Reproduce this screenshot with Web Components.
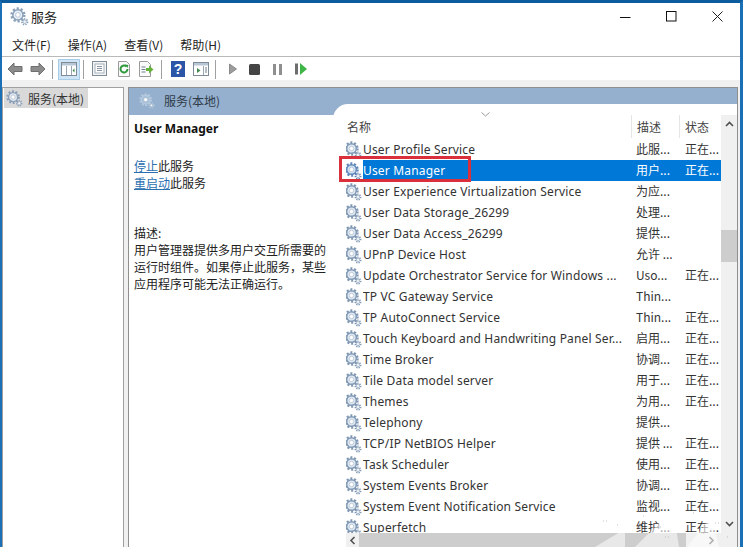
<!DOCTYPE html>
<html lang="zh-CN">
<head>
<meta charset="utf-8">
<title>服务</title>
<style>
  html, body { margin: 0; height: 100%; overflow: hidden; background: #fff; }
  body { font: 12px "Noto Sans", "Noto Sans CJK SC", sans-serif; color: #111; }
</style>
</head>
<body>
<svc-window></svc-window>

<script>
const CJK = `"Noto Sans CJK SC", "Noto Sans", sans-serif`;

class SvcGear extends HTMLElement {
    connectedCallback() {
        const size = this.getAttribute("size") || 18;
        const main = this.getAttribute("main") || "#7f97b3";
        const inner = this.getAttribute("inner") || "#dfe8f2";
        this.attachShadow({ mode: "open" });
        this.shadowRoot.innerHTML = `
      <style>
        :host { display: inline-flex; flex: none; }
        svg { display: block; }
      </style>
      <svg width="${size}" height="${size}" viewBox="0 0 18 18">
        <circle cx="7.5" cy="7.5" r="6" fill="none" stroke="${main}" stroke-width="2.4" stroke-dasharray="2 1.77"/>
        <circle cx="7.5" cy="7.5" r="4.8" fill="${inner}" stroke="${main}" stroke-width="1.4"/>
        <circle cx="7.5" cy="7.5" r="2.2" fill="#fff" stroke="#a9bbcf" stroke-width=".7"/>
        <circle cx="14" cy="14" r="2.6" fill="none" stroke="${main}" stroke-width="1.7" stroke-dasharray="1.2 1.05"/>
        <circle cx="14" cy="14" r="1.6" fill="#f2f5f8" stroke="#8ea3ba" stroke-width=".6"/>
      </svg>
    `;
    }
}

class SvcTitlebar extends HTMLElement {
    constructor() {
        super();
        this.attachShadow({ mode: "open" });
        this.shadowRoot.innerHTML = `
      <style>
        :host { display: flex; align-items: center; height: 30px; flex: none; box-sizing: border-box; padding: 0 0 4px 8px; background: #fff; }
        .title { margin-left: 2px; font: 13px ${CJK}; color: #222; }
        .btns { margin-left: auto; display: flex; }
        .btn { width: 46px; height: 26px; display: flex; align-items: center; justify-content: center; }
        svg { display: block; }
      </style>
      <svc-gear size="19" main="#8aa0b8" inner="#e8eef4"></svc-gear>
      <span class="title">服务</span>
      <div class="btns">
        <div class="btn"><svg width="11" height="11"><path d="M0 6.5h10.500" stroke="#111" stroke-width="1"/></svg></div>
        <div class="btn"><svg width="11" height="11"><rect x=".5" y=".5" width="9.500" height="9.500" fill="none" stroke="#111"/></svg></div>
        <div class="btn"><svg width="11" height="11"><path d="M.5.500l10 10M10.500.500l-10 10" stroke="#222" stroke-width="1"/></svg></div>
      </div>
    `;
    }
}

class SvcMenubar extends HTMLElement {
    constructor() {
        super();
        this.attachShadow({ mode: "open" });
        this.shadowRoot.innerHTML = `
      <style>
        :host { display: flex; gap: 17px; height: 24px; flex: none; align-items: center; padding-left: 10px; box-sizing: border-box;
                font: 12px ${CJK}; color: #222; border-bottom: 1px solid #b9b9b9; background: #fff; }
        span:first-child { margin-right: -2px; }
      </style>
      <span>文件(F)</span><span>操作(A)</span><span>查看(V)</span><span>帮助(H)</span>
    `;
    }
}

class SvcToolbar extends HTMLElement {
    constructor() {
        super();
        this.attachShadow({ mode: "open" });
        this.shadowRoot.innerHTML = `
      <style>
        :host { display: flex; height: 23px; flex: none; box-sizing: border-box; padding: 1px 0 0 3px; align-items: center; background: #fff; }
        svg { display: block; flex: none; }
        .sep { width: 1px; height: 19px; background: #a0a0a0; flex: none; }
        .active { width: 22px; height: 21px; background: #cfe4f5; border: 1px solid #a8cde8; box-sizing: border-box;
                  display: flex; align-items: center; justify-content: center; flex: none; }
      </style>
      <svg style="margin-left:2px" width="16" height="14"><path d="M1 7l6-6v3.500h8v5H7v3.500z" fill="#8c8c8c" stroke="#6f6f6f"/></svg>
      <svg style="margin-left:7px" width="16" height="14"><path d="M15 7L9 1v3.500H1v5h8v3.500z" fill="#8c8c8c" stroke="#6f6f6f"/></svg>
      <div class="sep" style="margin-left:6px"></div>
      <div class="active" style="margin-left:5px">
        <svg width="16" height="14"><rect x=".5" y=".5" width="15" height="13" fill="#fff" stroke="#7e8c99"/><rect x="1" y="1" width="14" height="2.500" fill="#b9c6d3"/><path d="M5.500 4v9M10.500 4v9" stroke="#9aa7b3"/><path d="M13.500 6.500l-2 2 2 2z" fill="#3d8a4a"/></svg>
      </div>
      <div class="sep" style="margin-left:3px"></div>
      <svg style="margin-left:8px" width="15" height="16"><rect x=".5" y=".5" width="14" height="14" fill="#f4f4f4" stroke="#7e8c99"/><rect x="3" y="3" width="9" height="9" fill="#fff" stroke="#a5b0ba"/><path d="M5 5.500h5M5 7.500h5M5 9.500h5" stroke="#8795a3"/></svg>
      <svg style="margin-left:10px" width="14" height="16"><path d="M1.500.500h8l3 3v12h-11z" fill="#fafafa" stroke="#9a9a9a"/><path d="M10.500 8a3.500 3.500 0 1 1-1-2.500" fill="none" stroke="#2f9a3c" stroke-width="2"/><path d="M8 3.500l3.500.500-1 3z" fill="#2f9a3c"/></svg>
      <svg style="margin-left:7px" width="16" height="16"><path d="M1.500.500h8l3 3v12h-11z" fill="#fafafa" stroke="#9a9a9a"/><path d="M3.500 6h4M3.500 8.500h4M3.500 11h4" stroke="#6f7f8f"/><path d="M8 7h3V4.500L15.500 8.500 11 12.500V10H8z" fill="#63b23c"/></svg>
      <div class="sep" style="margin-left:7px"></div>
      <svg style="margin-left:9px" width="14" height="16"><rect width="14" height="16" fill="#2b56a8"/><text x="7" y="13" font-family="Liberation Sans" font-weight="700" font-size="14" text-anchor="middle" fill="#fff">?</text></svg>
      <svg style="margin-left:8px" width="16" height="14"><rect x=".5" y=".5" width="15" height="13" fill="#fff" stroke="#7e8c99"/><rect x="1" y="1" width="14" height="2.500" fill="#b9c6d3"/><path d="M10.500 4v9" stroke="#9aa7b3"/><path d="M4 6l3.500 2.500L4 11z" fill="#3d8a4a"/><path d="M12 6h2M12 8h2M12 10h2" stroke="#6f7f8f"/></svg>
      <div class="sep" style="margin-left:6px"></div>
      <svg style="margin-left:13px" width="8" height="12"><path d="M.5 1v10l7-5z" fill="#9c9c9c" stroke="#8a8a8a"/></svg>
      <svg style="margin-left:12px" width="11" height="11"><rect width="11" height="11" rx="1.500" fill="#444"/></svg>
      <svg style="margin-left:13px" width="9" height="11"><rect width="3" height="11" fill="#8f8f8f"/><rect x="6" width="3" height="11" fill="#8f8f8f"/></svg>
      <svg style="margin-left:13px" width="12" height="12"><rect y=".5" width="3" height="11" fill="#6d6d6d"/><path d="M5 0v12l7-6z" fill="#3fb548"/></svg>
    `;
    }
}

class SvcTree extends HTMLElement {
    constructor() {
        super();
        this.attachShadow({ mode: "open" });
        this.shadowRoot.innerHTML = `
      <style>
        :host { display: block; width: 122px; flex: none; box-sizing: border-box; background: #fff; border: 1px solid #a0a0a0; border-bottom: 0; padding: 0 1px; }
        .node { display: flex; align-items: center; gap: 5px; width: 84px; height: 20px; box-sizing: border-box; padding-left: 2px; background: #d9d9d9; font: 12px ${CJK}; color: #333; white-space: nowrap; }
      </style>
      <div class="node"><svc-gear size="17" main="#8ba0b8" inner="#e3e9f0"></svc-gear><span>服务(本地)</span></div>
    `;
    }
}

class SvcDetail extends HTMLElement {
    constructor() {
        super();
        this.attachShadow({ mode: "open" });
        this.shadowRoot.innerHTML = `
      <style>
        :host { display: block; width: 204px; flex: none; box-sizing: border-box; padding: 5px 0 0 5px; background: #fff; font: 12px/17px ${CJK}; color: #222; }
        h2 { margin: 0; font: 700 12px/17px "Noto Sans", sans-serif; color: #111; }
        .actions { margin-top: 20px; }
        .actions a { color: #2b6fb0; text-decoration: underline; }
        .desc { margin-top: 33px; width: 196px; }
        p { margin: 0; }
      </style>
      <h2>User Manager</h2>
      <div class="actions">
        <div><a>停止</a>此服务</div>
        <div><a>重启动</a>此服务</div>
      </div>
      <div class="desc">
        <p>描述:</p>
        <p>用户管理器提供多用户交互所需要的运行时组件。如果停止此服务，某些应用程序可能无法正确运行。</p>
      </div>
    `;
    }
}

const SERVICES = [
    ["User Profile Service", "此服...", "正在..."],
    ["User Manager", "用户...", "正在...", true],
    ["User Experience Virtualization Service", "为应...", ""],
    ["User Data Storage_26299", "处理...", ""],
    ["User Data Access_26299", "提供...", ""],
    ["UPnP Device Host", "允许 ...", ""],
    ["Update Orchestrator Service for Windows ...", "Uso...", "正在..."],
    ["TP VC Gateway Service", "Thin...", ""],
    ["TP AutoConnect Service", "Thin...", "正在..."],
    ["Touch Keyboard and Handwriting Panel Ser...", "启用...", "正在..."],
    ["Time Broker", "协调...", "正在..."],
    ["Tile Data model server", "用于...", "正在..."],
    ["Themes", "为用...", "正在..."],
    ["Telephony", "提供...", ""],
    ["TCP/IP NetBIOS Helper", "提供 ...", "正在..."],
    ["Task Scheduler", "使用...", "正在..."],
    ["System Events Broker", "协调...", "正在..."],
    ["System Event Notification Service", "监视...", "正在..."],
    ["Superfetch", "维护...", "正在..."]
];

class SvcList extends HTMLElement {
    constructor() {
        super();
        this.attachShadow({ mode: "open" });
        const rows = SERVICES.map(([name, desc, state, selected]) => `
        <div class="row${selected ? " sel" : ""}">
          <div class="name"><svc-gear size="18" main="${selected ? "#5f86b8" : "#7f97b3"}" inner="${selected ? "#cfe0f2" : "#dfe8f2"}"></svc-gear><span class="label">${name}</span></div>
          <span class="cell">${desc}</span><span class="cell">${state}</span>
        </div>`).join("");
        this.shadowRoot.innerHTML = `
      <style>
        :host { display: flex; flex: 1; min-width: 0; position: relative; margin-top: -11px; background: #fff; border-radius: 15px 0 0 0; overflow: hidden;
                font: 12px "Noto Sans", ${CJK}; color: #333; }
        .main { flex: 1; min-width: 0; display: flex; flex-direction: column; padding-left: 13px; }
        .head { display: grid; grid-template-columns: 285px 48px 1fr; height: 35px; flex: none; box-sizing: border-box; padding-top: 11px; font: 12px ${CJK}; color: #444; position: relative; }
        .head span { display: flex; align-items: center; height: 23px; padding-left: 1px; }
        .head span + span { border-left: 1px solid #e5e5e5; padding-left: 5px; }
        .chev { position: absolute; left: 135px; top: 8px; }
        .rows { flex: 1; min-height: 0; overflow: hidden; }
        .row { display: grid; grid-template-columns: 284px 49px 1fr; height: 21px; align-items: center; white-space: nowrap; font-size: 12px; }
        .cell { padding-left: 6px; font-family: ${CJK}; height: 21px; line-height: 20px; }
        .name { display: flex; align-items: center; height: 21px; margin-left: -2px; }
        .label { margin-left: 1px; letter-spacing: .17px; line-height: 21px; flex: 1; }
        .sel .cell, .sel .label { background: #0078d7; color: #fff; }
        .hbar { height: 14px; flex: none; display: flex; align-items: center; background: #f0f0f0; }
        .hbar .thumb { flex: 1; height: 14px; background: #cdcdcd; margin: 0 22px 0 3px; }
        .vbar { width: 16px; flex: none; background: #f0f0f0; margin-top: 11px; display: flex; flex-direction: column; align-items: center; }
        .vbar .thumb { height: 32px; width: 16px; background: #cdcdcd; margin-top: 103px; }
        svg { display: block; flex: none; }
        .box { position: absolute; left: 6px; top: 52px; width: 132px; height: 26px; box-sizing: border-box; border: 3px solid #d9303c; pointer-events: none; }
      </style>
      <div class="main">
        <div class="head">
          <span>名称</span><span>描述</span><span>状态</span>
          <svg class="chev" width="9" height="5"><path d="M.5.500L4.500 4l4-3.500" fill="none" stroke="#9a9a9a"/></svg>
        </div>
        <div class="rows">${rows}</div>
        <div class="hbar">
          <svg style="margin-left:3px" width="7" height="9"><path d="M5.500 1L2 4.500 5.500 8" fill="none" stroke="#505050" stroke-width="1.600"/></svg>
          <div class="thumb"></div>
          <svg style="margin-right:6px" width="7" height="9"><path d="M1.500 1L5 4.500 1.500 8" fill="none" stroke="#505050" stroke-width="1.600"/></svg>
        </div>
      </div>
      <div class="vbar">
        <svg style="margin-top:6px" width="9" height="6"><path d="M1 5l3.500-3.500L8 5" fill="none" stroke="#505050" stroke-width="1.600"/></svg>
        <div class="thumb"></div>
        <svg style="margin-top:auto;margin-bottom:20px" width="9" height="6"><path d="M1 1l3.500 3.500L8 1" fill="none" stroke="#505050" stroke-width="1.600"/></svg>
      </div>
      <div class="box"></div>
    `;
    }
}

class SvcPane extends HTMLElement {
    constructor() {
        super();
        this.attachShadow({ mode: "open" });
        this.shadowRoot.innerHTML = `
      <style>
        :host { display: flex; flex-direction: column; flex: 1; min-width: 0; box-sizing: border-box; border: 1px solid #8f8f8f; border-bottom: 0; background: #fff; }
        .head { height: 27px; flex: none; box-sizing: border-box; padding: 0 0 2px 10px; display: flex; align-items: center; gap: 9px; background: #95b0cf; font: 12px ${CJK}; color: #2f3b47; }
        .body { flex: 1; min-height: 0; display: flex; }
      </style>
      <div class="head"><svc-gear size="16" main="#b6cade" inner="#a6bfd9"></svc-gear><span>服务(本地)</span></div>
      <div class="body"><svc-detail></svc-detail><svc-list></svc-list></div>
    `;
    }
}

// faint watermark in the bottom right corner of the screenshot
class SvcWatermark extends HTMLElement {
    constructor() {
        super();
        this.attachShadow({ mode: "open" });
        this.shadowRoot.innerHTML = `
      <style>
        :host { position: absolute; right: 0; bottom: 0; width: 145px; height: 40px; pointer-events: none; }
        svg { display: block; }
      </style>
      <svg width="145" height="40">
        <path d="M0 40L30 22v18zM40 40L78 2l6 38zM92 40l24-30 8 30z" fill="#fff" opacity=".55"/>
        <path d="M8 14h4M22 18h3M48 9h3M62 20h5M98 6h3M120 16h4M70 30h4M108 26h3M132 30h3" stroke="#b5b5b5" stroke-dasharray="1 2" opacity=".8"/>
      </svg>
    `;
    }
}

class SvcWindow extends HTMLElement {
    constructor() {
        super();
        this.attachShadow({ mode: "open" });
        this.shadowRoot.innerHTML = `
      <style>
        :host { display: flex; flex-direction: column; position: relative; height: 547px; box-sizing: border-box; border-top: 3px solid #0d5c9e; border-left: 2px solid #1a6fb5; border-right: 3px solid #1a6fb5; background: #f0f0f0; }
        .content { flex: 1; min-height: 0; display: flex; gap: 4px; padding: 7px 2px 0 0; background: #f0f0f0; }
      </style>
      <svc-titlebar></svc-titlebar>
      <svc-menubar></svc-menubar>
      <svc-toolbar></svc-toolbar>
      <div class="content"><svc-tree></svc-tree><svc-pane></svc-pane></div>
      <svc-watermark></svc-watermark>
    `;
    }
}

customElements.define("svc-gear", SvcGear);
customElements.define("svc-titlebar", SvcTitlebar);
customElements.define("svc-menubar", SvcMenubar);
customElements.define("svc-toolbar", SvcToolbar);
customElements.define("svc-tree", SvcTree);
customElements.define("svc-detail", SvcDetail);
customElements.define("svc-list", SvcList);
customElements.define("svc-pane", SvcPane);
customElements.define("svc-watermark", SvcWatermark);
customElements.define("svc-window", SvcWindow);
</script>
</body>
</html>
